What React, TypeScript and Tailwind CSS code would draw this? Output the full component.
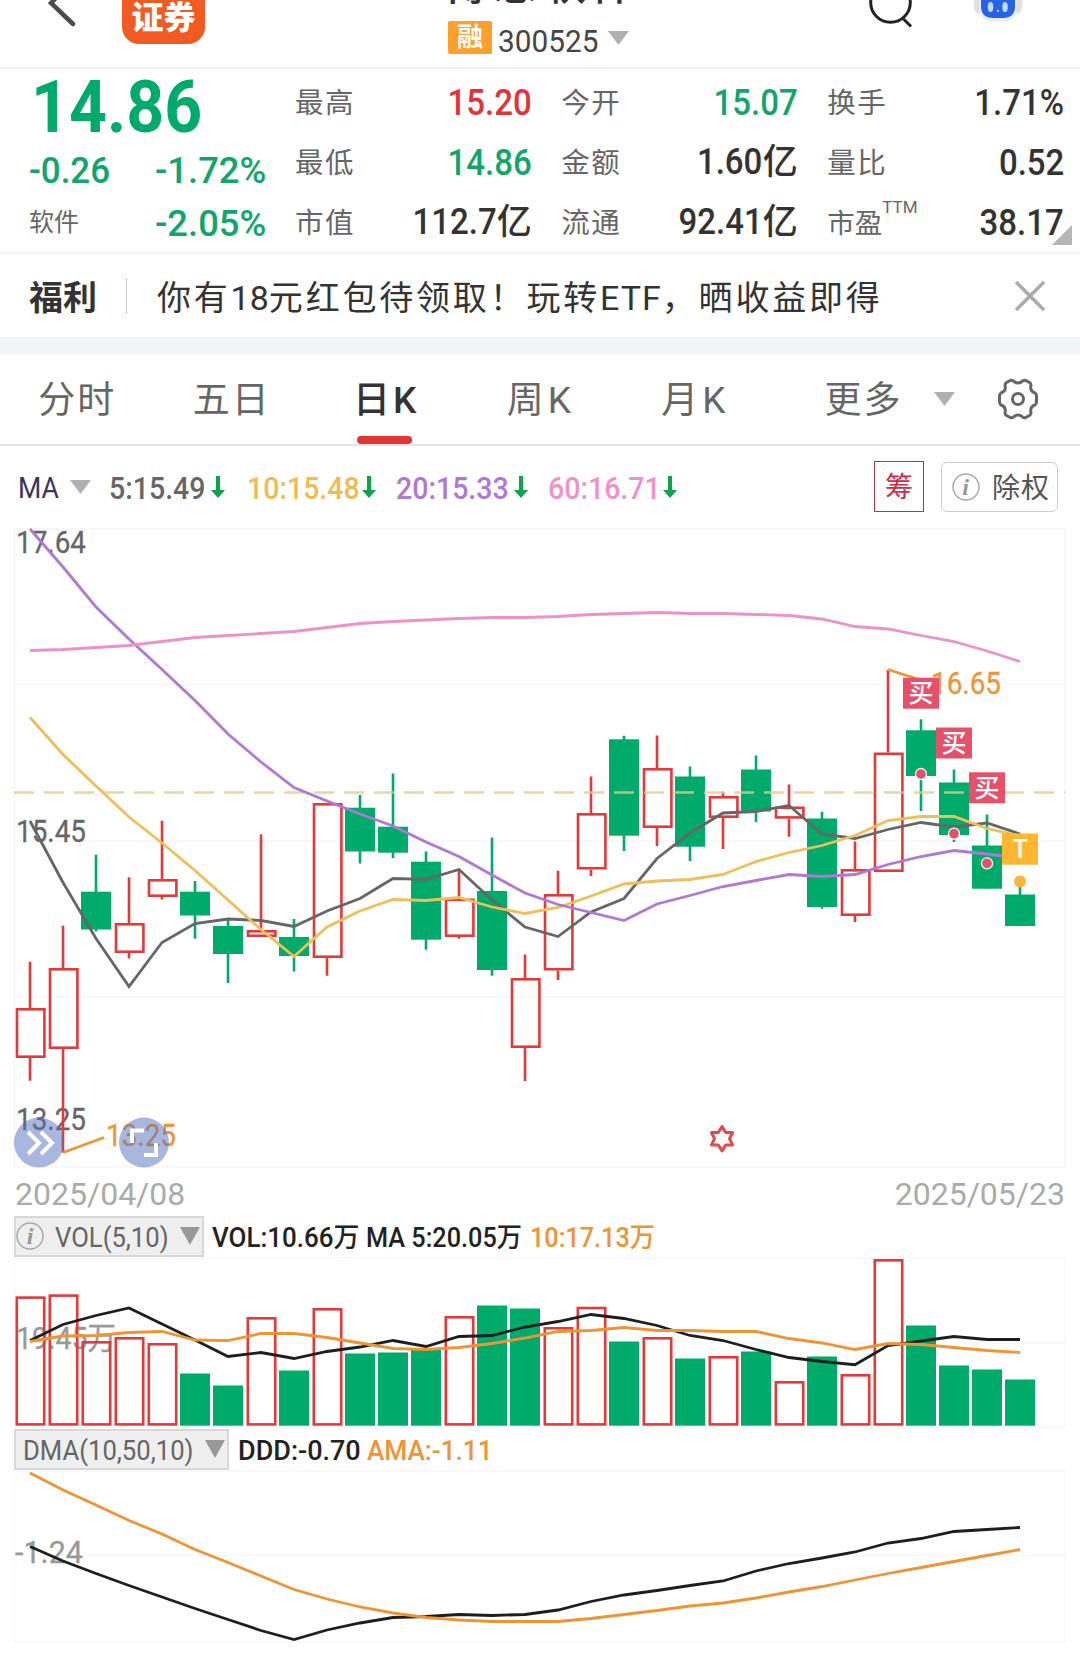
import { clsx } from 'clsx';

type Candle = [up: boolean, high: number, top: number, bottom: number, low: number];

// y values are page pixels, one entry per trading day
const CANDLES: Candle[] = [
    [true, 961.7, 1008, 1058, 1080.7],
    [true, 925.7, 968, 1049, 1152.5],
    [false, 854.7, 891.7, 929.5, 931.5],
    [true, 877.3, 923, 953, 958.5],
    [true, 820.7, 879, 897, 899.5],
    [false, 881, 891.7, 915.5, 938.7],
    [false, 918, 926, 954, 983],
    [true, 834.3, 930, 937, 937],
    [false, 919, 937, 956, 971.5],
    [true, 803, 803, 958, 975.7],
    [false, 795, 807.7, 851.5, 863.5],
    [false, 773.5, 826.7, 852.7, 858],
    [false, 851.5, 861.7, 939.7, 949.7],
    [true, 871, 898.5, 937, 938.7],
    [false, 837.5, 891, 970, 975.7],
    [true, 954.5, 978, 1048, 1081],
    [true, 870.7, 894, 970.5, 980],
    [true, 776.5, 813, 869.5, 876],
    [false, 735.7, 739.3, 835.7, 851],
    [true, 735.5, 768, 828, 846],
    [false, 766.5, 776.5, 846.7, 861],
    [true, 791.7, 796, 818, 849],
    [false, 755.5, 769.5, 811.5, 822],
    [true, 784.5, 806.5, 818.7, 836.7],
    [false, 811.7, 818.5, 907, 908.7],
    [true, 841.5, 869, 916, 922],
    [true, 670, 752.5, 872, 872],
    [false, 719.3, 730.3, 776, 811],
    [false, 769.5, 782.5, 835, 842],
    [false, 814.5, 845.5, 888.7, 888.7],
    [false, 885, 894.5, 926, 926],
];

const MA5 = [821, 882.5, 938.5, 986.5, 942.5, 923.5, 919, 920.5, 926.5, 911, 898.5, 878.5, 879.3, 869.5, 900, 927, 936.5, 912, 898.5, 858.5, 833, 813, 811.5, 805.5, 834, 838.5, 829.5, 822.5, 827, 823, 834];
const MA10 = [717.5, 754.5, 786, 817, 843, 870.5, 900, 929.5, 956.5, 927, 911, 899.5, 900.5, 897.5, 907, 913.5, 907.5, 896, 884, 881, 879.5, 874.5, 861.5, 852.5, 845.5, 835.5, 820.5, 816.5, 816.5, 828.5, 836];
const MA20 = [529, 567, 607, 639, 669.5, 700.5, 734, 762, 787.5, 801, 814, 826, 842, 856.5, 875, 893, 904.5, 912.5, 920.5, 904, 895.5, 886.5, 880.5, 874.5, 876.5, 874.5, 864.5, 856.5, 850.5, 854, 858];
const MA60 = [650.5, 649.5, 647.5, 645.5, 641.5, 637.5, 635.5, 633.5, 631.5, 627.5, 623.5, 621.5, 620, 618.5, 617.5, 617.5, 616.5, 614.5, 613.5, 612.5, 613.5, 613.5, 614.5, 615.5, 619, 626.5, 629, 635.5, 641.5, 651, 661.5];

const VOLUMES: [up: boolean, top: number][] = [
    [true, 1296.3], [true, 1294.3], [true, 1341], [true, 1337], [true, 1343],
    [false, 1373.5], [false, 1385.5], [true, 1317], [false, 1370.5], [true, 1308],
    [false, 1353.5], [false, 1352.5], [false, 1350], [true, 1316], [false, 1305.5],
    [false, 1308.5], [true, 1327], [true, 1306.7], [false, 1341.5], [true, 1337],
    [false, 1358.5], [true, 1356], [false, 1351.5], [true, 1381], [false, 1356.5],
    [true, 1374], [true, 1259], [false, 1325.5], [false, 1365.5], [false, 1369.5],
    [false, 1379.5],
];
const VOLUME_MA5 = [1340.5, 1324.5, 1315.5, 1308, 1324, 1340, 1356.5, 1352.5, 1358.5, 1351.5, 1347, 1340.5, 1346.5, 1336.5, 1335.5, 1327, 1321.5, 1314.5, 1318.5, 1325.5, 1335.5, 1340.5, 1349.5, 1357.5, 1361.5, 1364.7, 1345.5, 1341, 1336.5, 1339.5, 1339.5];
const VOLUME_MA10 = [1341.5, 1336, 1335.5, 1332.5, 1331.5, 1340, 1340.7, 1333.5, 1333.5, 1337.5, 1343, 1348.5, 1349.5, 1347.5, 1343.5, 1338, 1331.5, 1330.5, 1327.5, 1330.5, 1330.5, 1331.5, 1331.5, 1338.5, 1343, 1349.5, 1343.5, 1344.5, 1347.5, 1350.5, 1352.5];

const DDD = [1546.5, 1561, 1573.5, 1585.5, 1597, 1608.5, 1619.5, 1630.5, 1639.5, 1630, 1623, 1617.5, 1616.5, 1614.5, 1615.5, 1614.5, 1610, 1601.5, 1595, 1590.5, 1585.5, 1581, 1571, 1563.5, 1558, 1552, 1543, 1538.5, 1531.5, 1529.5, 1527.5];
const AMA = [1473, 1490, 1505, 1520.5, 1534, 1549.5, 1562.5, 1576, 1589.5, 1599, 1607, 1613, 1617.5, 1620, 1621.5, 1621.5, 1621.5, 1618.5, 1614.5, 1610.5, 1606, 1603, 1598, 1592, 1586.5, 1580, 1573.5, 1567.5, 1561.5, 1555.5, 1549.5];

const RED = '#e23a3a';
const GREEN = '#00aa6b';
const ORANGE = '#ee9433';

const dayX = (i: number) => 30 + i * 33;

function Line({ values, color }: { values: number[]; color: string }) {
    return (
        <polyline
            points={values.map((y, i) => `${dayX(i)},${y}`).join(' ')}
            fill="none"
            stroke={color}
            strokeWidth={2.8}
        />
    );
}

interface ChartTextProps {
    x: number;
    y: number;
    width: number;
    color: string;
    children: string;
}

function ChartText({ x, y, width, color, children }: ChartTextProps) {
    return (
        <text x={x} y={y} textLength={width} lengthAdjust="spacingAndGlyphs" fill={color} fontSize={31} fontWeight={400} stroke={color} strokeWidth={0.3}>
            {children}
        </text>
    );
}

function Caret({ className }: { className?: string }) {
    return (
        <svg className={clsx('shrink-0', className)} viewBox="0 0 21 14" preserveAspectRatio="none" fill="currentColor">
            <path d="M0 0h21L10.500 14z" />
        </svg>
    );
}

function InfoIcon() {
    return (
        <svg className="w-[28px] h-[28px] shrink-0" viewBox="0 0 28 28">
            <circle cx="14" cy="14" r="13" fill="none" stroke="#aaa" strokeWidth="1.5" />
            <text x="14" y="22" textAnchor="middle" fill="#999" fontSize="24" fontStyle="italic" fontWeight="700" fontFamily="Liberation Serif">i</text>
        </svg>
    );
}

function Header() {
    return (
        <header className="relative flex h-[69px] border-b-2 border-[#f3f3f3] overflow-hidden">
            <svg className="w-[122px] h-[68px] shrink-0" viewBox="0 0 122 68" fill="none" stroke="#4c4c4c" strokeWidth="4.5" strokeLinecap="round">
                <path d="M72 -18L51 3l22 21" />
            </svg>
            <div className="w-[83px] h-[82px] -mt-[38px] shrink-0 rounded-[17px] bg-[#f15a22] text-white font-black text-[32px] leading-[32px] text-center pt-[7px]">
                <div>平安</div>
                <div className="mt-[1px]">证券</div>
            </div>
            <div className="w-[243px] shrink-0" />
            <div className="w-[190px] shrink-0">
                <div className="-mt-[37px] h-[44px] leading-[44px] text-[44px] font-medium text-[#333] whitespace-nowrap -ml-[4px] tracking-[5px]">博思软件</div>
                <div className="flex items-center h-[33px] mt-[14px]">
                    <span className="w-[44px] h-[33px] shrink-0 rounded-[2px] bg-[#ff9f2c] text-white font-bold text-[26px] leading-[32px] text-center">融</span>
                    <span className="w-[116px] pl-[6px] text-[32px] leading-[33px] text-[#444] mt-[7px]">
                        <span className="inline-block origin-left scale-x-[.93]">300525</span>
                    </span>
                    <Caret className="w-[21px] h-[14px] text-[#b0b0b0]" />
                </div>
            </div>
            <svg className="w-[60px] h-[40px] ml-[222px] shrink-0" viewBox="860 0 60 40" fill="none" stroke="#222" strokeWidth="3">
                <circle cx="890.500" cy="2.500" r="19.800" />
                <path d="M903.500 19l7.500 7.500" />
            </svg>
            <svg className="w-[60px] h-[40px] ml-[48px] shrink-0" viewBox="968 0 60 40">
                <rect x="974" y="-8" width="48" height="22" rx="6" fill="#e3dfe2" />
                <rect x="979" y="-18" width="38" height="39.500" rx="13" fill="#e9edf5" />
                <path d="M981 0h34v6q0 12-12 12h-10q-12 0-12-12z" fill="#2763e6" />
                <ellipse cx="990.500" cy="7" rx="2.800" ry="5" fill="#bcd8ff" />
                <ellipse cx="1005" cy="7" rx="2.800" ry="5" fill="#bcd8ff" />
                <circle cx="998" cy="11" r="1.200" fill="#bcd8ff" />
            </svg>
        </header>
    );
}

const STATS = [
    { label: '最高', value: '15.20', tone: 'text-[#e0343a]' },
    { label: '今开', value: '15.07', tone: 'text-[#11a56a]' },
    { label: '换手', value: '1.71%' },
    { label: '最低', value: '14.86', tone: 'text-[#11a56a]' },
    { label: '金额', value: '1.60', unit: '亿' },
    { label: '量比', value: '0.52' },
    { label: '市值', value: '112.7', unit: '亿' },
    { label: '流通', value: '92.41', unit: '亿' },
    { label: '市盈', value: '38.17', sup: 'TTM' },
];

function Quote() {
    return (
        <section className="relative flex h-[185px] border-b-2 border-[#f3f3f3] pt-[3px]">
            <div className="w-[295px] shrink-0 pl-[29px] text-[#11a56a] font-medium text-[37.5px]">
                <div className="h-[69px] leading-[71px] text-[72px] font-bold text-[#00aa6b]">
                    <span className="inline-block origin-left scale-x-[.92] ml-[2px]">14.86</span>
                </div>
                <div className="flex h-[58px] leading-[59px]">
                    <span className="w-[126px]"><span className="inline-block origin-left scale-x-[.93]">-0.26</span></span>
                    <span className="inline-block origin-left scale-x-[.97]">-1.72%</span>
                </div>
                <div className="flex h-[47px] leading-[48px]">
                    <span className="w-[126px] text-[25px] font-normal text-[#666]">软件</span>
                    <span className="inline-block origin-left scale-x-[.97]">-2.05%</span>
                </div>
            </div>
            <div className="grid grid-cols-3 gap-x-[29.500px] w-[769px] h-[180px]">
                {STATS.map((s) => (
                    <div key={s.label} className="flex justify-between items-center h-[60px] leading-[60px]">
                        <span className={clsx('pt-[4px] text-[#666] whitespace-nowrap', s.sup ? 'text-[27.500px]' : 'text-[28.500px] tracking-[1.500px]')}>
                            {s.label}
                            {s.sup && <sup className="text-[17px] leading-none top-[-20px]">{s.sup}</sup>}
                        </span>
                        <span className={clsx('flex text-[37.500px] font-medium', s.tone ?? 'text-[#333]')}>
                            <span className="inline-block origin-right scale-x-[.88]">{s.value}</span>
                            {s.unit && <span className="text-[35px] pt-[2px]">{s.unit}</span>}
                        </span>
                    </div>
                ))}
            </div>
            <svg className="absolute right-[8px] bottom-[7px] w-[20px] h-[20px]" viewBox="0 0 20 20">
                <path d="M20 0v20H0z" fill="#b5b5b5" />
            </svg>
        </section>
    );
}

function Banner() {
    return (
        <section className="flex items-center h-[83px] pl-[29px] pr-[35px] text-[#333]">
            <span className="w-[97px] pt-[5px] text-[34px] font-bold">福利</span>
            <span className="w-[1px] h-[36px] bg-[#ccc]" />
            <span className="ml-[30px] pt-[5px] text-[34px] tracking-[2.800px] whitespace-nowrap">
                你有<span className="tracking-[0px]">18</span>元红包待领取！玩转<span className="tracking-[1px]">ETF</span>，晒收益即得
            </span>
            <svg className="w-[30px] h-[30px] ml-auto shrink-0" viewBox="0 0 30 30" stroke="#aaa" strokeWidth="3.500">
                <path d="M1 1l28 28M29 1L1 29" />
            </svg>
        </section>
    );
}

const TABS = ['分时', '五日', '日K', '周K', '月K'];

function Tabs() {
    return (
        <nav className="flex h-[92px] border-b-2 border-[#e4e4e4] text-[37px] tracking-[2px] text-[#666]">
            {TABS.map((t) => {
                const active = t === '日K';
                return (
                    <div key={t} className="relative w-[154.500px] flex justify-center items-center pt-[3px]">
                        {active ? (
                            <span className="font-medium text-[#333] tracking-[3px]">{t}</span>
                        ) : (
                            <span className={clsx(t.endsWith('K') && 'tracking-[4px]')}>{t}</span>
                        )}
                        {active && <span className="absolute bottom-0 left-[48px] w-[55px] h-[8px] rounded-full bg-[#e33434]" />}
                    </div>
                );
            })}
            <div className="flex items-center ml-[52px] w-[109px] pt-[3px]">更多</div>
            <Caret className="w-[21px] h-[14px] text-[#b0b0b0] self-center" />
            <svg className="w-[44px] h-[44px] ml-[41px] self-center" viewBox="-22 -22 44 44" fill="none" stroke="#666" strokeWidth="3" strokeLinejoin="round">
                <path d="M-11.500 -16.500L-7 -18.800Q-5 -19 -4 -17.500Q0 -14.500 4 -17.500Q5 -19 7 -18.800L11.500 -16.500Q13.500 -15 12.800 -13Q12 -7.500 17 -6Q18.500 -5 18.500 -3V3Q18.500 5 17 6Q12 7.500 12.800 13Q13.500 15 11.500 16.500L7 18.800Q5 19 4 17.500Q0 14.500 -4 17.500Q-5 19 -7 18.800L-11.500 16.500Q-13.500 15 -12.800 13Q-12 7.500 -17 6Q-18.500 5 -18.500 3V-3Q-18.500 -5 -17 -6Q-12 -7.500 -12.800 -13Q-13.500 -15 -11.500 -16.500z" />
                <circle r="5.500" />
            </svg>
        </nav>
    );
}

const AVERAGES = [
    { text: '5:15.49', color: 'text-[#666]', slot: 'w-[102px]', item: 'w-[138px]' },
    { text: '10:15.48', color: 'text-[#eebb55]', slot: 'w-[115px]', item: 'w-[149px]' },
    { text: '20:15.33', color: 'text-[#af78d4]', slot: 'w-[118px]', item: 'w-[152px]' },
    { text: '60:16.71', color: 'text-[#f092c8]', slot: 'w-[115px]', item: 'w-[326px]' },
];

function AverageBar() {
    return (
        <div className="flex items-center h-[81px] pl-[18px] text-[31px]">
            <span className="w-[52px] pt-[5px] text-[29px] text-[#3a3560]"><span className="inline-block origin-left scale-x-[.92]">MA</span></span>
            <Caret className="w-[21px] h-[14px] text-[#b0b0b0] mr-[18px]" />
            {AVERAGES.map((a) => (
                <div key={a.text} className={clsx('flex items-center shrink-0 font-medium', a.color, a.item)}>
                    <span className={clsx('pt-[5px]', a.slot)}><span className="inline-block origin-left scale-x-[.92]">{a.text}</span></span>
                    <svg className="w-[14px] h-[22px]" viewBox="0 0 14 22" fill="#0fa24c">
                        <path d="M5 0h4v14h5L7 22L0 14h5z" />
                    </svg>
                </div>
            ))}
            <span className="w-[50px] h-[51px] shrink-0 border border-[#a8384e] text-[#d02a45] text-[28px] leading-[52px] text-center">筹</span>
            <span className="flex items-center w-[117px] h-[50px] ml-[17px] pl-[10px] shrink-0 border border-[#ccc] rounded-[6px] text-[#555] text-[28px] tracking-[1px]">
                <InfoIcon />
                <span className="ml-[12px] pt-[4px]">除权</span>
            </span>
        </div>
    );
}

const MARKERS = [
    { x: 903, y: 677.7 },
    { x: 936, y: 727.5 },
    { x: 969, y: 772.3 },
];

const DOTS = [
    { x: 921, y: 774 },
    { x: 954, y: 833.7 },
    { x: 987, y: 863.3 },
];

function PriceChart() {
    return (
        <svg className="block w-full h-[643px]" viewBox="0 527 1080 643">
            <path d="M14.500 529H1065V1167H14.500zM14.500 684.500H1065M14.500 840.700H1065M14.500 996.700H1065" fill="none" stroke="#f8f8f8" strokeWidth="2" />
            <ChartText x={16} y={553} width={70} color="#666">17.64</ChartText>
            <ChartText x={16} y={841.5} width={70} color="#666">15.45</ChartText>
            <ChartText x={16} y={1130} width={70} color="#666">13.25</ChartText>

            {CANDLES.map(([up, high, top, bottom, low], i) => {
                const x = dayX(i);
                return up ? (
                    <g key={i} fill="none" stroke={RED} strokeWidth={2.6}>
                        <path d={`M${x} ${high}V${top}M${x} ${bottom}V${low}`} />
                        <rect x={x - 13} y={top + 1.3} width={27.4} height={bottom - top - 2.6} />
                    </g>
                ) : (
                    <g key={i} fill={GREEN}>
                        <rect x={x - 1.3} y={high} width={2.6} height={low - high} />
                        <rect x={x - 15} y={top} width={30} height={bottom - top} />
                    </g>
                );
            })}

            <path d="M14 792.500H1065" stroke="#e6c98a" strokeOpacity=".8" strokeWidth="2.600" strokeDasharray="20 10" />
            <Line values={MA5} color="#666" />
            <Line values={MA10} color="#eebf58" />
            <Line values={MA20} color="#af78d4" />
            <Line values={MA60} color="#ec92c4" />

            <path d="M63 1152.500L104 1137.500M888 669.500L930 683" stroke={ORANGE} strokeWidth="2.800" />
            <ChartText x={106} y={1145.5} width={70} color={ORANGE}>13.25</ChartText>
            <ChartText x={931} y={693.5} width={70} color={ORANGE}>16.65</ChartText>

            {MARKERS.map((m) => (
                <g key={m.x}>
                    <rect x={m.x} y={m.y} width={36} height={31} fill="#e5506a" />
                    <text x={m.x + 18} y={m.y + 24.5} textAnchor="middle" fill="#fff" fontSize={25} fontWeight={500}>买</text>
                </g>
            ))}
            <rect x="1002" y="833.500" width="36" height="31.200" fill="#ffb732" />
            <text x="1020" y="858" textAnchor="middle" fill="#fff" fontSize="25" fontWeight="500">T</text>
            {DOTS.map((d) => (
                <circle key={d.x} cx={d.x} cy={d.y} r={5.5} fill="#e5506a" stroke="#fff" strokeWidth={1.3} />
            ))}
            <circle cx="1020" cy="881.500" r="6" fill="#fbb53c" />

            <path
                d="M722 1126.500l3.800 6h6.700l-3 6.200 3 6.200h-6.700l-3.800 6-3.800-6h-6.700l3-6.200-3-6.200h6.700z"
                fill="none"
                stroke="#e24a4a"
                strokeWidth="3"
                strokeLinejoin="round"
            />

            <g fill="#5370be" fillOpacity=".5">
                <circle cx="39" cy="1142.500" r="25" />
                <circle cx="144" cy="1142.500" r="25" />
            </g>
            <g fill="none" stroke="#fff" strokeWidth="4">
                <path d="M28 1132l11 11-11 11M41 1132l11 11-11 11" />
                <path d="M132 1143v-12.500h12M156 1143v12h-12" />
            </g>
        </svg>
    );
}

function VolumeChart() {
    return (
        <svg className="block w-full h-[171px]" viewBox="0 1257 1080 171">
            <path d="M14.500 1258H1065V1427.500H14.500zM14.500 1343H1065" fill="none" stroke="#f8f8f8" strokeWidth="1.500" />
            <ChartText x={16} y={1348.7} width={100} color="#999">19.45万</ChartText>
            {VOLUMES.map(([up, top], i) => {
                const x = dayX(i);
                return up ? (
                    <rect key={i} x={x - 13.2} y={top + 1.3} width={27.4} height={1425.7 - top - 2.6} fill="none" stroke={RED} strokeWidth={2.6} />
                ) : (
                    <rect key={i} x={x - 15} y={top} width={30} height={1425.7 - top} fill={GREEN} />
                );
            })}
            <Line values={VOLUME_MA5} color="#1e1e1e" />
            <Line values={VOLUME_MA10} color={ORANGE} />
        </svg>
    );
}

function DmaChart() {
    return (
        <svg className="block w-full h-[187px]" viewBox="0 1470 1080 187">
            <path d="M14.500 1471H1065V1642H14.500zM14.500 1555.500H1065" fill="none" stroke="#f8f8f8" strokeWidth="1.500" />
            <ChartText x={15} y={1563} width={68} color="#999">-1.24</ChartText>
            <Line values={DDD} color="#1e1e1e" />
            <Line values={AMA} color={ORANGE} />
        </svg>
    );
}

export default function App() {
    return (
        <div className="w-[1080px] h-[1657px] overflow-hidden bg-white font-[Roboto,'Noto_Sans_CJK_SC',sans-serif]">
            <Header />
            <Quote />
            <Banner />
            <div className="h-[17px] bg-[#f2f4f8]" />
            <Tabs />
            <AverageBar />
            <PriceChart />
            <div className="flex justify-between items-center h-[45px] pl-[15px] pr-[15px] pt-[3px] text-[32px] text-[#aaa]">
                <span>2025/04/08</span>
                <span>2025/05/23</span>
            </div>
            <div className="flex items-center h-[42px] pl-[14px] text-[27px] font-medium text-[#222] whitespace-nowrap">
                <div className="flex items-center w-[190px] h-[41px] shrink-0 border-2 border-[#d8d8d8] bg-[#efefef] font-normal text-[#666]">
                    <InfoIcon />
                    <span className="w-[124px] pl-[11px] pt-[4px] shrink-0"><span className="inline-block origin-left scale-x-[.95]">VOL(5,10)</span></span>
                    <Caret className="w-[20px] h-[18px] ml-[12px] text-[#999]" />
                </div>
                <span className="w-[154px] ml-[8px] pt-[4px]"><span className="inline-block origin-left scale-x-[.96]">VOL:10.66万</span></span>
                <span className="w-[164px] pt-[4px]"><span className="inline-block origin-left scale-x-[.935]">MA 5:20.05万</span></span>
                <span className="pt-[4px] text-[#ee9433]"><span className="inline-block origin-left scale-x-[.935]">10:17.13万</span></span>
            </div>
            <VolumeChart />
            <div className="flex items-center h-[42px] pl-[14px] text-[27px] font-medium text-[#222] whitespace-nowrap">
                <div className="flex items-center w-[215px] h-[41px] shrink-0 border-2 border-[#d8d8d8] bg-[#efefef] font-normal text-[#666]">
                    <span className="w-[189px] pl-[7px] pt-[4px] shrink-0"><span className="inline-block origin-left scale-x-[.95]">DMA(10,50,10)</span></span>
                    <Caret className="w-[20px] h-[18px] text-[#999]" />
                </div>
                <span className="w-[129px] ml-[9px] pt-[4px]"><span className="inline-block origin-left">DDD:-0.70</span></span>
                <span className="pt-[4px] text-[#ee9433]"><span className="inline-block origin-left scale-x-[.97]">AMA:-1.11</span></span>
            </div>
            <DmaChart />
        </div>
    );
}
